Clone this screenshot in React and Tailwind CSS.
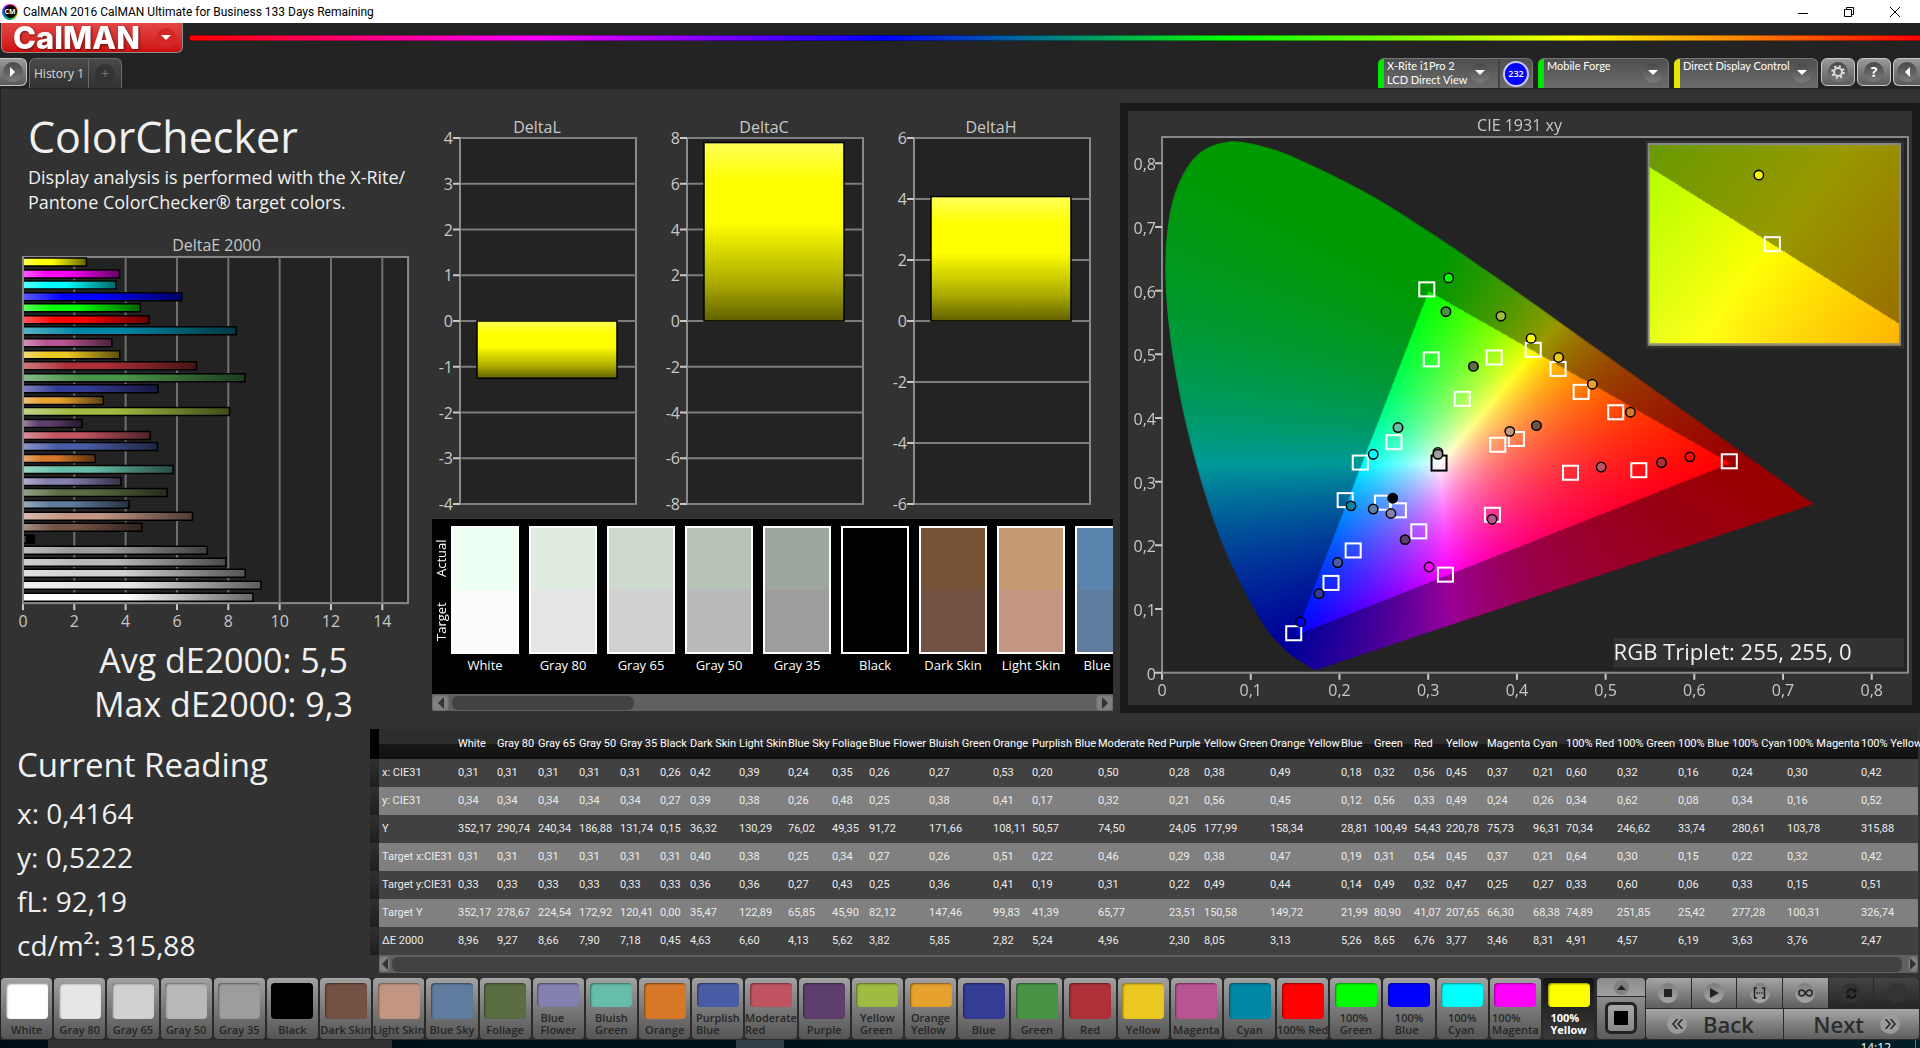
import React, { useEffect, useRef } from "react";

const PATCHES = [
  { name: "White", color: "#ffffff", actual: "#eefff3", target: "#fbfbfb", x: "0,31", y: "0,34", Y: "352,17", tx: "0,31", ty: "0,33", tY: "352,17", dE: "8,96", col: 39 },
  { name: "Gray 80", color: "#e6e6e6", actual: "#e0ecdf", target: "#e6e6e6", x: "0,31", y: "0,34", Y: "290,74", tx: "0,31", ty: "0,33", tY: "278,67", dE: "9,27", col: 41 },
  { name: "Gray 65", color: "#d1d1d1", actual: "#cfdace", target: "#d1d1d1", x: "0,31", y: "0,34", Y: "240,34", tx: "0,31", ty: "0,33", tY: "224,54", dE: "8,66", col: 41 },
  { name: "Gray 50", color: "#b9b9b9", actual: "#b8c3b8", target: "#bababa", x: "0,31", y: "0,34", Y: "186,88", tx: "0,31", ty: "0,33", tY: "172,92", dE: "7,90", col: 41 },
  { name: "Gray 35", color: "#9d9d9d", actual: "#9da79d", target: "#9d9d9d", x: "0,31", y: "0,34", Y: "131,74", tx: "0,31", ty: "0,33", tY: "120,41", dE: "7,18", col: 40 },
  { name: "Black", color: "#000000", actual: "#000000", target: "#000000", x: "0,26", y: "0,27", Y: "0,15", tx: "0,31", ty: "0,33", tY: "0,00", dE: "0,45", col: 30 },
  { name: "Dark Skin", color: "#735244", actual: "#765336", target: "#735244", x: "0,42", y: "0,39", Y: "36,32", tx: "0,40", ty: "0,36", tY: "35,47", dE: "4,63", col: 49 },
  { name: "Light Skin", color: "#c29683", actual: "#c49b73", target: "#c29683", x: "0,39", y: "0,38", Y: "130,29", tx: "0,38", ty: "0,36", tY: "122,89", dE: "6,60", col: 49 },
  { name: "Blue Sky", color: "#5f7b9d", actual: "#5a84ae", target: "#5f7b9d", x: "0,24", y: "0,26", Y: "76,02", tx: "0,25", ty: "0,27", tY: "65,85", dE: "4,13", col: 44 },
  { name: "Foliage", color: "#5a6d43", x: "0,35", y: "0,48", Y: "49,35", tx: "0,34", ty: "0,43", tY: "45,90", dE: "5,62", col: 37 },
  { name: "Blue Flower", color: "#8480b0", x: "0,26", y: "0,25", Y: "91,72", tx: "0,27", ty: "0,25", tY: "82,12", dE: "3,82", col: 60 },
  { name: "Bluish Green", color: "#66bda8", x: "0,27", y: "0,38", Y: "171,66", tx: "0,26", ty: "0,36", tY: "147,46", dE: "5,85", col: 64 },
  { name: "Orange", color: "#d77828", x: "0,53", y: "0,41", Y: "108,11", tx: "0,51", ty: "0,41", tY: "99,83", dE: "2,82", col: 39 },
  { name: "Purplish Blue", color: "#4a5ca5", x: "0,20", y: "0,17", Y: "50,57", tx: "0,22", ty: "0,19", tY: "41,39", dE: "5,24", col: 66 },
  { name: "Moderate Red", color: "#c15461", x: "0,50", y: "0,32", Y: "74,50", tx: "0,46", ty: "0,31", tY: "65,77", dE: "4,96", col: 71 },
  { name: "Purple", color: "#5e3e6c", x: "0,28", y: "0,21", Y: "24,05", tx: "0,29", ty: "0,22", tY: "23,51", dE: "2,30", col: 35 },
  { name: "Yellow Green", color: "#9fbb41", x: "0,38", y: "0,56", Y: "177,99", tx: "0,38", ty: "0,49", tY: "150,58", dE: "8,05", col: 66 },
  { name: "Orange Yellow", color: "#e6a12f", x: "0,49", y: "0,45", Y: "158,34", tx: "0,47", ty: "0,44", tY: "149,72", dE: "3,13", col: 71 },
  { name: "Blue", color: "#343c95", x: "0,18", y: "0,12", Y: "28,81", tx: "0,19", ty: "0,14", tY: "21,99", dE: "5,26", col: 33 },
  { name: "Green", color: "#489447", x: "0,32", y: "0,56", Y: "100,49", tx: "0,31", ty: "0,49", tY: "80,90", dE: "8,65", col: 40 },
  { name: "Red", color: "#af3038", x: "0,56", y: "0,33", Y: "54,43", tx: "0,54", ty: "0,32", tY: "41,07", dE: "6,76", col: 32 },
  { name: "Yellow", color: "#ebc722", x: "0,45", y: "0,49", Y: "220,78", tx: "0,45", ty: "0,47", tY: "207,65", dE: "3,77", col: 41 },
  { name: "Magenta", color: "#b95492", x: "0,37", y: "0,24", Y: "75,73", tx: "0,37", ty: "0,25", tY: "66,30", dE: "3,46", col: 46 },
  { name: "Cyan", color: "#0087a5", x: "0,21", y: "0,26", Y: "96,31", tx: "0,21", ty: "0,27", tY: "68,38", dE: "8,31", col: 33 },
  { name: "100% Red", color: "#ff0000", x: "0,60", y: "0,34", Y: "70,34", tx: "0,64", ty: "0,33", tY: "74,89", dE: "4,91", col: 51 },
  { name: "100% Green", color: "#00ff00", x: "0,32", y: "0,62", Y: "246,62", tx: "0,30", ty: "0,60", tY: "251,85", dE: "4,57", col: 61 },
  { name: "100% Blue", color: "#0000ff", x: "0,16", y: "0,08", Y: "33,74", tx: "0,15", ty: "0,06", tY: "25,42", dE: "6,19", col: 54 },
  { name: "100% Cyan", color: "#00ffff", x: "0,24", y: "0,34", Y: "280,61", tx: "0,22", ty: "0,33", tY: "277,28", dE: "3,63", col: 55 },
  { name: "100% Magenta", color: "#ff00ff", x: "0,30", y: "0,16", Y: "103,78", tx: "0,32", ty: "0,15", tY: "100,31", dE: "3,76", col: 74 },
  { name: "100% Yellow", color: "#ffff00", x: "0,42", y: "0,52", Y: "315,88", tx: "0,42", ty: "0,51", tY: "326,74", dE: "2,47", col: 57 },
];

const TWO_LINE = ["Blue Flower", "Bluish Green", "Purplish Blue", "Moderate Red", "Yellow Green", "Orange Yellow", "100% Green", "100% Blue", "100% Cyan", "100% Magenta", "100% Yellow"];

const ROWS = [
  ["x: CIE31", "x"],
  ["y: CIE31", "y"],
  ["Y", "Y"],
  ["Target x:CIE31", "tx"],
  ["Target y:CIE31", "ty"],
  ["Target Y", "tY"],
  ["ΔE 2000", "dE"],
];

const toNumber = (s) => parseFloat(s.replace(",", "."));

/* ---------- window chrome ---------- */

function TitleBar() {
  return (
    <div className="h-[23px] bg-white flex items-center pl-[2px]">
      <span className="w-4 h-4 rounded-full bg-[conic-gradient(#ff00aa,#ff3030,#ffb000,#7bd000,#00a050,#00a0d0,#3050ff,#a020ff,#ff00aa)] flex items-center justify-center">
        <span className="w-[13px] h-[13px] rounded-full bg-black text-white text-[7px] leading-none font-bold flex items-center justify-center">
          CM
        </span>
      </span>
      <span className="ml-[5px] font-['Roboto','Open_Sans',sans-serif] text-xs text-black">CalMAN 2016 CalMAN Ultimate for Business 133 Days Remaining</span>
      <div className="ml-auto mr-[2px] flex">
        <button aria-label="Minimize" className="w-[46px] flex justify-center">
          <svg width="12" height="12" stroke="#000"><path d="M1 7.5h10" /></svg>
        </button>
        <button aria-label="Restore" className="w-[46px] flex justify-center">
          <svg width="12" height="12" fill="none" stroke="#000"><path d="M1.500 3.500h7v7h-7zM3.500 3.500v-2h7v7h-2" /></svg>
        </button>
        <button aria-label="Close" className="w-[46px] flex justify-center">
          <svg width="12" height="12" stroke="#000"><path d="M1 1l10 10M11 1L1 11" /></svg>
        </button>
      </div>
    </div>
  );
}

function RoundIcon({ children, className = "" }) {
  return (
    <span className={`w-5 h-5 shrink-0 rounded-full bg-gradient-to-b from-[#484848] to-[#7c7c7c] flex items-center justify-center ${className}`}>
      {children}
    </span>
  );
}

function DownArrow() {
  return (
    <svg width="10" height="6"><path d="M0 0h10L5 5z" fill="#fff" /></svg>
  );
}

function Device({ lines, strip, className, badge }) {
  return (
    <div className={`h-[30px] rounded-t-md overflow-hidden border-t border-r border-[#777] bg-gradient-to-b from-[#505050] to-[#6c6c6c] flex ${className}`}>
      <span className={`w-[6px] shrink-0 ${strip}`} />
      <button aria-haspopup="menu" className={`flex-1 min-w-0 flex justify-between pl-[3px] text-left font-['Lato','Open_Sans',sans-serif] text-[11px] leading-[14px] text-white ${badge ? "pr-2" : "pr-[5px]"}`}>
        <span className="whitespace-nowrap">
          {lines.map((l) => (
            <span key={l} className="block">{l}</span>
          ))}
        </span>
        <RoundIcon className="mt-1"><DownArrow /></RoundIcon>
      </button>
      {badge && (
        <span className="w-[34px] shrink-0 border-l-2 border-[#444] flex items-center justify-center">
          <span className="w-[26px] h-[26px] rounded-full border-2 border-[#c8c8ff] bg-[#0000ff] text-white text-[9px] leading-none font-semibold flex items-center justify-center">
            {badge}
          </span>
        </span>
      )}
    </div>
  );
}

function SquareButton({ label, className, children }) {
  return (
    <button aria-label={label} className={`h-7 border border-[#c8c8c8] bg-gradient-to-b from-[#9a9a9a] to-[#5c5c5c] flex items-center justify-center ${className}`}>
      <RoundIcon>{children}</RoundIcon>
    </button>
  );
}

function Header() {
  return (
    <header className="bg-[#232323]">
      <div className="flex">
        <button className="ml-px w-[182px] h-[30px] rounded-b-md border border-t-0 border-[#8c8c8c] bg-gradient-to-b from-[#e34545] to-[#cc0c0c] flex items-center justify-between pl-[11px] pr-[6px]">
          <span className="font-['Inter','Open_Sans',sans-serif] font-extrabold text-[31px] leading-none text-white drop-shadow-[1px_1px_1px_rgba(0,0,0,0.5)]">
            CalMAN
          </span>
          <span className="w-5 h-5 rounded-full bg-[#d52626] flex items-center justify-center"><DownArrow /></span>
        </button>
        <div className="flex-1 ml-[7px] mt-3 h-[6px] border-y border-black/40 bg-[linear-gradient(to_right,#ff0000,#ff00ff_20%,#0000ff_40%,#00ff00_60%,#ffff00_80%,#ff0000)]" />
      </div>
      <div className="mt-[5px] h-[30px] flex items-start">
        <SquareButton label="Expand" className="w-[27px] rounded-r-md border-l-0">
          <svg width="6" height="10"><path d="M0 0l5 5-5 5z" fill="#fff" /></svg>
        </SquareButton>
        <div className="ml-[2px] h-[30px] flex rounded-t-md border border-b-0 border-[#6a6a6a] bg-gradient-to-b from-[#4a4a4a] to-[#323232]">
          <button className="w-[58px] text-xs whitespace-nowrap text-[#dcdcdc]">History 1</button>
          <button aria-label="Add tab" className="w-[33px] border-l border-[#6a6a6a] flex items-center justify-center">
            <span className="w-5 h-5 rounded-full bg-[#333] text-[#777] text-sm leading-5 text-center">+</span>
          </button>
        </div>
        <div className="ml-auto flex">
          <Device lines={["X-Rite i1Pro 2", "LCD Direct View"]} strip="bg-[#00e600]" className="w-[155px]" badge="232" />
          <Device lines={["Mobile Forge"]} strip="bg-[#00e600]" className="ml-[5px] w-[131px]" />
          <Device lines={["Direct Display Control"]} strip="bg-[#e6e600]" className="ml-[5px] w-[144px]" />
          <SquareButton label="Settings" className="ml-[3px] w-[34px] rounded-md">
            <svg width="14" height="14" viewBox="0 0 14 14" fill="none" stroke="#ddd">
              <circle cx="7" cy="7" r="4" strokeWidth="2" />
              <circle cx="7" cy="7" r="5.800" strokeWidth="2" strokeDasharray="2.200 2.355" />
            </svg>
          </SquareButton>
          <SquareButton label="Help" className="ml-[2px] w-[34px] rounded-md">
            <span className="text-white font-bold text-sm leading-none">?</span>
          </SquareButton>
          <SquareButton label="Collapse" className="ml-[2px] w-[27px] rounded-l-md border-r-0">
            <svg width="6" height="10"><path d="M6 0L1 5l5 5z" fill="#fff" /></svg>
          </SquareButton>
        </div>
      </div>
    </header>
  );
}

/* ---------- bar charts ---------- */

function DeltaEChart() {
  const px = (v) => 22 + v * 25.73;
  const bars = [...PATCHES].reverse();
  return (
    <svg viewBox="0 0 432 400" className="block w-full overflow-visible">
      <defs>
        <linearGradient id="barShade">
          <stop offset="0" stopColor="#fff" stopOpacity="0.35" />
          <stop offset="0.25" stopColor="#fff" stopOpacity="0" />
          <stop offset="0.45" stopColor="#000" stopOpacity="0" />
          <stop offset="1" stopColor="#000" stopOpacity="0.6" />
        </linearGradient>
      </defs>
      <text x="216" y="15" textAnchor="middle" className="text-base fill-[#c8c8c8]">DeltaE 2000</text>
      <rect x="22" y="21" width="386" height="347" fill="#232323" stroke="#8a8a8a" strokeWidth="2" />
      {[2, 4, 6, 8, 10, 12, 14].map((v) => (
        <path key={v} d={`M${px(v)} 21V368`} stroke="#707070" strokeWidth="2" />
      ))}
      {[0, 2, 4, 6, 8, 10, 12, 14].map((v) => (
        <g key={v}>
          <path d={`M${px(v)} 369v6`} stroke="#c8c8c8" strokeWidth="2" />
          <text x={px(v)} y="392" textAnchor="middle" className="text-base fill-[#c8c8c8]">{v}</text>
        </g>
      ))}
      {bars.map((p, i) => {
        const y = 22 + Math.round(i * 11.57);
        const w = toNumber(p.dE) * 25.73 - 1;
        return (
          <g key={p.name}>
            <rect x="23" y={y} width={w} height="8" fill={p.color} />
            <rect x="23" y={y} width={w} height="8" fill="url(#barShade)" />
            <path d={`M23 ${y}h${w}v8h-${w}`} fill="none" stroke="#000" strokeWidth="1.500" />
          </g>
        );
      })}
    </svg>
  );
}

function DeltaChart({ title, max, step, value }) {
  const py = (v) => 205 - (v * 183) / max;
  const ticks = [];
  for (let v = max; v >= -max; v -= step) ticks.push(v);
  const top = Math.min(py(value), py(0));
  const height = Math.abs(py(value) - py(0));
  return (
    <svg viewBox="0 0 227 403" className="block w-full overflow-visible">
      <defs>
        <linearGradient id="yellowFill" x1="0" y1="0" x2="0" y2="1">
          <stop offset="0" stopColor="#ffff59" />
          <stop offset="0.22" stopColor="#ffff00" />
          <stop offset="0.45" stopColor="#ffff00" />
          <stop offset="0.8" stopColor="#a8a800" />
          <stop offset="1" stopColor="#606000" />
        </linearGradient>
      </defs>
      <text x="105" y="17" textAnchor="middle" className="text-base fill-[#c8c8c8]">{title}</text>
      <rect x="28" y="22" width="176" height="366" fill="#232323" stroke="#8a8a8a" strokeWidth="2" />
      {ticks.map((v) => (
        <g key={v}>
          <path d={`M28 ${py(v)}H204`} stroke="#7d7d7d" strokeWidth="2" />
          <path d={`M21 ${py(v)}h7`} stroke="#c8c8c8" strokeWidth="2" />
          <text x="21" y={py(v) + 6} textAnchor="end" className="text-base fill-[#c8c8c8]">{v}</text>
        </g>
      ))}
      <rect x="45" y={top} width="140" height={height} fill="url(#yellowFill)" stroke="#000" strokeWidth="1.500" />
    </svg>
  );
}

/* ---------- CIE diagram ---------- */

const LOCUS = [
  [0.1741, 0.005], [0.1714, 0.0051], [0.1689, 0.0069], [0.1644, 0.0109], [0.1566, 0.0177], [0.144, 0.0297],
  [0.1241, 0.0578], [0.1096, 0.0868], [0.0913, 0.1327], [0.0687, 0.2007], [0.0454, 0.295], [0.0235, 0.4127],
  [0.0082, 0.5384], [0.0039, 0.6548], [0.0139, 0.7502], [0.0389, 0.812], [0.0743, 0.8338], [0.1142, 0.8262],
  [0.1547, 0.8059], [0.2296, 0.7543], [0.3016, 0.6923], [0.3731, 0.6245], [0.4441, 0.5547], [0.5125, 0.4866],
  [0.5752, 0.4242], [0.627, 0.3725], [0.6915, 0.3083], [0.7347, 0.2653],
];

const TARGETS = [
  [0.299, 0.602], [0.304, 0.492], [0.375, 0.495], [0.419, 0.507], [0.447, 0.477], [0.473, 0.441], [0.512, 0.409],
  [0.339, 0.43], [0.262, 0.362], [0.224, 0.33], [0.207, 0.271], [0.249, 0.267], [0.267, 0.255], [0.29, 0.222],
  [0.216, 0.192], [0.191, 0.141], [0.149, 0.062], [0.32, 0.154], [0.373, 0.248], [0.379, 0.358], [0.4, 0.367],
  [0.461, 0.314], [0.538, 0.318], [0.64, 0.332],
];

const READINGS = [
  [0.323, 0.62, "#00ff00"], [0.32, 0.567, "#489447"], [0.382, 0.56, "#9fbb41"], [0.416, 0.525, "#ffff00"],
  [0.447, 0.495, "#ebc722"], [0.485, 0.453, "#e6a12f"], [0.528, 0.409, "#d77828"], [0.351, 0.481, "#5a6d43"],
  [0.266, 0.385, "#66bda8"], [0.238, 0.343, "#00ffff"], [0.213, 0.262, "#0087a5"], [0.238, 0.257, "#5f7b9d"],
  [0.258, 0.25, "#8480b0"], [0.26, 0.274, "#000000"], [0.274, 0.209, "#5e3e6c"], [0.198, 0.173, "#4a5ca5"],
  [0.177, 0.124, "#343c95"], [0.156, 0.08, "#0000ff"], [0.301, 0.166, "#ff00ff"], [0.372, 0.241, "#b95492"],
  [0.392, 0.379, "#c29683"], [0.422, 0.388, "#735244"], [0.495, 0.323, "#c15461"], [0.563, 0.33, "#af3038"],
  [0.595, 0.339, "#ff0000"], [0.311, 0.346, "#e6e6e6"], [0.311, 0.343, "#9d9d9d"],
];

const CIE_W = 783;
const CIE_H = 593;
const cieX = (x) => 34 + x * 886;
const cieY = (y) => 561 - y * 636;
const comma = (v) => String(v).replace(".", ",");

// chromaticity to rgb, dimmed outside of the Rec.709 gamut
function chromaToRgb(x, y) {
  const X = x / y;
  const Z = (1 - x - y) / y;
  const rgb = [
    3.2406 * X - 1.5372 - 0.4986 * Z,
    -0.9689 * X + 1.8758 + 0.0415 * Z,
    0.0557 * X - 0.204 + 1.057 * Z,
  ];
  const max = Math.max(...rgb);
  const level = Math.min(...rgb) < 0 ? 153 : 255;
  return rgb.map((c) => (Math.max(c, 0) / max) * level);
}

function paintArea(ctx, left, top, width, height, toX, toY) {
  const buffer = document.createElement("canvas");
  buffer.width = width;
  buffer.height = height;
  const bctx = buffer.getContext("2d");
  const image = bctx.createImageData(width, height);
  for (let j = 0; j < height; j++) {
    for (let i = 0; i < width; i++) {
      const [r, g, b] = chromaToRgb(toX(left + i), Math.max(toY(top + j), 0.001));
      const k = (j * width + i) * 4;
      image.data[k] = r;
      image.data[k + 1] = g;
      image.data[k + 2] = b;
      image.data[k + 3] = 255;
    }
  }
  bctx.putImageData(image, 0, 0);
  ctx.drawImage(buffer, left, top);
}

// smooth curve through every point of the locus (Catmull-Rom)
function traceLocus(ctx) {
  const pts = LOCUS.map(([x, y]) => [cieX(x), cieY(y)]);
  ctx.beginPath();
  ctx.moveTo(pts[0][0], pts[0][1]);
  for (let i = 0; i < pts.length - 1; i++) {
    const p0 = pts[Math.max(i - 1, 0)];
    const p1 = pts[i];
    const p2 = pts[i + 1];
    const p3 = pts[Math.min(i + 2, pts.length - 1)];
    ctx.bezierCurveTo(
      p1[0] + (p2[0] - p0[0]) / 6,
      p1[1] + (p2[1] - p0[1]) / 6,
      p2[0] - (p3[0] - p1[0]) / 6,
      p2[1] - (p3[1] - p1[1]) / 6,
      p2[0],
      p2[1]
    );
  }
  ctx.closePath();
}

function CieDiagram() {
  const ref = useRef(null);

  useEffect(() => {
    const ctx = ref.current.getContext("2d");
    ctx.clearRect(0, 0, CIE_W, CIE_H);
    ctx.fillStyle = "#232323";
    ctx.fillRect(34, 26, 745, 535);

    ctx.save();
    traceLocus(ctx);
    ctx.clip();
    paintArea(ctx, 34, 26, 745, 535, (p) => (p - 34) / 886, (p) => (561 - p) / 636);
    ctx.restore();

    // magnified area around the current target
    ctx.fillStyle = "#323232";
    ctx.fillRect(517, 30, 258, 207);
    paintArea(ctx, 520, 33, 252, 201, (p) => 0.4193 + (p - 644) / 5000, (p) => 0.5053 - (p - 133) / 3950);
  }, []);

  return (
    <div className="grid">
      <canvas ref={ref} width={CIE_W} height={CIE_H} className="[grid-area:1/1] w-full" />
      <svg viewBox={`0 0 ${CIE_W} ${CIE_H}`} className="[grid-area:1/1] block w-full">
        <text x="391" y="20" textAnchor="middle" className="text-base fill-[#c8c8c8]">CIE 1931 xy</text>
        <rect x="34" y="26" width="745" height="535" fill="none" stroke="#8a8a8a" strokeWidth="2" />
        {[0, 0.1, 0.2, 0.3, 0.4, 0.5, 0.6, 0.7, 0.8].map((v) => (
          <g key={v} className="text-base fill-[#c8c8c8]">
            <path d={`M${cieX(v)} 562v6M27 ${cieY(v)}h7`} stroke="#c8c8c8" strokeWidth="2" />
            <text x={cieX(v)} y="584" textAnchor="middle">{comma(v)}</text>
            <text x="28" y={cieY(v) + 7} textAnchor="end">{comma(v)}</text>
          </g>
        ))}
        <g fill="none" stroke="#fff" strokeWidth="2">
          {TARGETS.map(([x, y]) => (
            <rect key={`${x}-${y}`} x={cieX(x) - 8} y={cieY(y) - 7} width="15" height="14" />
          ))}
          <rect x={cieX(0.3128) - 8} y={cieY(0.33) - 7} width="15" height="15" stroke="#000" />
        </g>
        <g stroke="#000" strokeWidth="1.500">
          {READINGS.map(([x, y, fill]) => (
            <circle key={`${x}-${y}`} cx={cieX(x)} cy={cieY(y)} r="4.700" fill={fill} />
          ))}
        </g>
        <rect x="520" y="33" width="251" height="200" fill="none" stroke="#8a8a8a" strokeWidth="2" />
        <circle cx="630" cy="64" r="4.700" fill="#ff0" stroke="#000" strokeWidth="1.500" />
        <rect x="636" y="126" width="15" height="14" fill="none" stroke="#fff" strokeWidth="2" />
        <rect x="485" y="526" width="290" height="30" fill="#323232" />
        <text x="485" y="548" className="text-[22px] fill-[#f0f0f0]">RGB Triplet: 255, 255, 0</text>
      </svg>
    </div>
  );
}

/* ---------- patch strip and table ---------- */

function ScrollArrow({ label, flip, className }) {
  return (
    <button aria-label={label} className={`rounded bg-[#808080] border border-[#6e6e6e] flex items-center justify-center ${className}`}>
      <svg width="6" height="12"><path d={flip ? "M0 0l6 6-6 6z" : "M6 0L0 6l6 6z"} fill="#333" /></svg>
    </button>
  );
}

function PatchStrip() {
  return (
    <div>
      <div className="h-[175px] bg-black flex pt-[7px] overflow-hidden text-white">
        <div className="w-[19px] shrink-0 h-32 flex flex-col-reverse">
          <span className="flex-1 rotate-180 text-center text-[13px] leading-[19px] [writing-mode:vertical-rl]">Target</span>
          <span className="flex-1 rotate-180 text-center text-[13px] leading-[19px] [writing-mode:vertical-rl]">Actual</span>
        </div>
        <div className="flex-1 min-w-0 flex gap-[10px] overflow-hidden">
          {PATCHES.slice(0, 9).map((p) => (
            <div key={p.name} className="w-[68px] shrink-0">
              <div className="h-32 border-2 border-white flex flex-col">
                <div className="flex-1" style={{ background: p.actual }} />
                <div className="flex-1" style={{ background: p.target }} />
              </div>
              <div className="mt-px text-[13px] leading-5 text-center whitespace-nowrap">{p.name}</div>
            </div>
          ))}
        </div>
      </div>
      <div className="h-[17px] bg-[#606060] flex items-center justify-between">
        <ScrollArrow label="Scroll left" className="w-[17px] h-4" />
        <div className="ml-[3px] w-[182px] h-[14px] rounded-md bg-[#424242]" />
        <ScrollArrow label="Scroll right" flip className="ml-auto w-[17px] h-4" />
      </div>
    </div>
  );
}

function ReadingsTable() {
  return (
    <div className="flex-1 min-w-0 mr-[2px]">
      <table className="w-full table-fixed border-collapse font-['Roboto','Open_Sans',sans-serif] text-[11px] text-[#ececec] text-left whitespace-nowrap">
        <colgroup>
          <col style={{ width: 9 }} />
          <col style={{ width: 79 }} />
          {PATCHES.map((p) => (
            <col key={p.name} style={{ width: p.col }} />
          ))}
        </colgroup>
        <thead>
          <tr className="h-[30px] bg-[linear-gradient(#2d2d2d_50%,#191919_50%,#111)] text-white">
            <th className="p-0 bg-black" />
            <th className="p-0" />
            {PATCHES.map((p) => (
              <th key={p.name} scope="col" className="p-0 font-normal">{p.name}</th>
            ))}
          </tr>
        </thead>
        <tbody>
          {ROWS.map(([label, key]) => (
            <tr key={key} className="h-7 bg-[#414141] even:bg-[#808080]">
              <td className="p-0 bg-gradient-to-b from-[#303030] to-[#1e1e1e]" />
              <th scope="row" className="p-0 pl-[3px] font-normal">{label}</th>
              {PATCHES.map((p) => (
                <td key={p.name} className="p-0">{p[key]}</td>
              ))}
            </tr>
          ))}
        </tbody>
      </table>
      <div className="ml-[9px] h-[18px] bg-[#606060] flex items-center">
        <ScrollArrow label="Scroll table left" className="w-[11px] h-4" />
        <div className="flex-1 ml-[2px] mr-[6px] h-[15px] rounded-md bg-[#424242]" />
        <ScrollArrow label="Scroll table right" flip className="w-[10px] h-4" />
      </div>
    </div>
  );
}

/* ---------- bottom bar ---------- */

function PatchButton({ patch, active }) {
  const tall = !TWO_LINE.includes(patch.name);
  return (
    <button
      className={`flex-1 min-w-0 h-[61px] rounded pt-1 pb-[3px] flex flex-col items-center justify-between border-t ${
        active
          ? "bg-gradient-to-b from-[#161616] to-[#3a3a3a] border-[#111] text-white font-bold"
          : "bg-gradient-to-b from-[#a0a0a0] to-[#555] border-[#aaa] text-[#262626] font-semibold"
      }`}
    >
      <span
        className={`w-[42px] rounded shadow-[inset_1px_1px_2px_rgba(0,0,0,0.45)] ${tall ? "h-9" : "h-6"}`}
        style={{ backgroundColor: patch.color }}
      />
      <span className="text-[11px] leading-3 text-left whitespace-nowrap">
        {tall ? patch.name : patch.name.split(" ").map((w) => <span key={w} className="block">{w}</span>)}
      </span>
    </button>
  );
}

function ControlButton({ label, dim, children }) {
  return (
    <button
      aria-label={label}
      className={`flex-1 h-[30px] flex items-center justify-center ${
        dim ? "bg-gradient-to-b from-[#444] to-[#262626]" : "bg-gradient-to-b from-[#a6a6a6] to-[#5e5e5e]"
      }`}
    >
      <span className={`w-5 h-5 rounded-full flex items-center justify-center ${dim ? "bg-[#333]" : "bg-gradient-to-b from-[#7c7c7c] to-[#a8a8a8]"}`}>
        {children}
      </span>
    </button>
  );
}

function BottomBar() {
  return (
    <footer className="flex mt-[5px] pb-px bg-[#2a2a2a]">
      <div className="flex-1 min-w-0 flex gap-[2px]">
        {PATCHES.map((p) => (
          <PatchButton key={p.name} patch={p} active={p.name === "100% Yellow"} />
        ))}
      </div>
      <div className="ml-[3px] w-12 h-[61px] rounded overflow-hidden flex flex-col gap-px">
        <button aria-label="Show more" className="h-[18px] bg-gradient-to-b from-[#8c8c8c] to-[#a0a0a0] flex items-center justify-center">
          <span className="w-[15px] h-[15px] rounded-full bg-[#808080] flex items-center justify-center">
            <svg width="9" height="5"><path d="M0 5h9L4.500 0z" fill="#222" /></svg>
          </span>
        </button>
        <button aria-label="Read patch" className="flex-1 bg-gradient-to-b from-[#8c8c8c] to-[#5a5a5a] flex items-center justify-center">
          <span className="w-8 h-8 rounded-md border-[3px] border-[#222] bg-gradient-to-b from-[#a8a8a8] to-[#888] flex items-center justify-center">
            <span className="w-[14px] h-[14px] bg-black" />
          </span>
        </button>
      </div>
      <div className="ml-px mr-px w-[273px] flex flex-col gap-px rounded overflow-hidden">
        <div className="flex gap-px">
          <ControlButton label="Stop"><span className="w-2 h-2 bg-[#222]" /></ControlButton>
          <ControlButton label="Play"><svg width="9" height="10"><path d="M0 0l9 5-9 5z" fill="#222" /></svg></ControlButton>
          <ControlButton label="Read series">
            <svg width="13" height="12" fill="none" stroke="#222" strokeWidth="1.500">
              <path d="M4 1H1.500v10H4M9 1h2.500v10H9M3.500 6h1.500M6 6h1.200M8.200 6h1.300" />
            </svg>
          </ControlButton>
          <ControlButton label="Read continuously">
            <svg width="15" height="8" fill="none" stroke="#222" strokeWidth="1.500">
              <path d="M7.500 4C6 1.500 5 1 3.800 1a3 3 0 0 0 0 6C5 7 6 6.500 7.500 4S10 1 11.200 1a3 3 0 0 1 0 6C10 7 9 6.500 7.500 4z" />
            </svg>
          </ControlButton>
          <ControlButton label="Refresh" dim>
            <svg width="13" height="13" viewBox="0 0 13 13" fill="none" stroke="#161616" strokeWidth="2">
              <path d="M2 6a4.500 4.500 0 0 1 7.500-2.600M11 7a4.500 4.500 0 0 1-7.500 2.600" />
              <path d="M11.500 1v4.500H7zM1.500 12V7.500H6z" fill="#161616" stroke="none" />
            </svg>
          </ControlButton>
          <ControlButton label="Record" dim />
        </div>
        <div className="flex gap-px text-[22px] leading-none font-semibold text-[#2c2c2c]">
          <button className="flex-1 h-[30px] flex items-center gap-4 pl-[21px] bg-gradient-to-b from-[#a6a6a6] to-[#5e5e5e]">
            <span className="w-5 h-5 rounded-full bg-[#9c9c9c] flex items-center justify-center">
              <svg width="11" height="10" fill="none" stroke="#222" strokeWidth="1.500"><path d="M5.500 0L1 5l4.500 5M10.500 0L6 5l4.500 5" /></svg>
            </span>
            Back
          </button>
          <button className="flex-1 h-[30px] flex items-center justify-end gap-4 pr-[19px] bg-gradient-to-b from-[#a6a6a6] to-[#5e5e5e]">
            Next
            <span className="w-5 h-5 rounded-full bg-[#9c9c9c] flex items-center justify-center">
              <svg width="11" height="10" fill="none" stroke="#222" strokeWidth="1.500"><path d="M.500 0L5 5 .500 10M5.500 0L10 5l-4.500 5" /></svg>
            </span>
          </button>
        </div>
      </div>
    </footer>
  );
}

function Taskbar() {
  return (
    <div className="h-2 bg-gradient-to-r from-[#000d16] to-[#001c24] flex overflow-hidden">
      <div className="ml-12 w-[344px] bg-[#323232]" />
      <div className="ml-[344px] w-12 bg-[#343f49]" />
      <span className="ml-auto mt-px mr-[24px] text-xs leading-[14px] text-white">14:12</span>
      <div className="mr-1 w-px bg-[#6d777c]" />
    </div>
  );
}

export default function App() {
  return (
    <div className="bg-[#323232] font-['Open_Sans','Noto_Sans',sans-serif]">
      <TitleBar />
      <Header />
      <main className="border-t border-l border-[#222]">
        <div className="grid grid-cols-[minmax(0,431fr)_minmax(0,681fr)_minmax(0,807fr)] items-start">
          <section className="min-w-0 pt-6 text-[#f0f0f0]">
            <h1 className="pl-[27px] text-[43px] leading-[48px]">ColorChecker</h1>
            <p className="pl-[27px] mt-1 text-lg leading-[25px] whitespace-nowrap">
              Display analysis is performed with the X-Rite/
              <br />
              Pantone ColorChecker® target colors.
            </p>
            <div className="mt-[21px]"><DeltaEChart /></div>
            <div className="pl-[14px] pt-[3px] pb-[3px] text-center text-[34px] leading-[44px]">
              <p>Avg dE2000: 5,5</p>
              <p>Max dE2000: 9,3</p>
            </div>
          </section>
          <section className="min-w-0 pt-[27px]">
            <div className="grid grid-cols-3">
              <DeltaChart title="DeltaL" max={4} step={1} value={-1.25} />
              <DeltaChart title="DeltaC" max={8} step={2} value={7.8} />
              <DeltaChart title="DeltaH" max={6} step={2} value={4.08} />
            </div>
            <PatchStrip />
          </section>
          <section className="min-w-0 ml-[7px] mt-[14px] border-8 border-[#1a1a1a]">
            <CieDiagram />
          </section>
        </div>
        <div className="flex">
          <section className="w-[369px] shrink-0 pl-4 pt-[14px] text-[#f0f0f0] text-[28px] leading-[44px]">
            <h2 className="mb-1 text-[33px]">Current Reading</h2>
            <p>x: 0,4164</p>
            <p>y: 0,5222</p>
            <p>fL: 92,19</p>
            <p>cd/m²: 315,88</p>
          </section>
          <ReadingsTable />
        </div>
        <BottomBar />
      </main>
      <Taskbar />
    </div>
  );
}
